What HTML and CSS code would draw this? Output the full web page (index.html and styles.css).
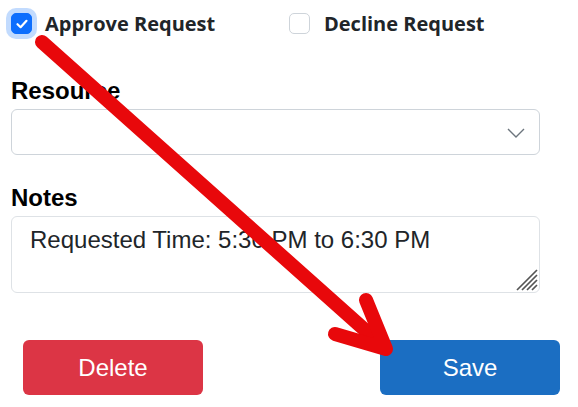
FILE: index.html
```html
<!DOCTYPE html>
<html lang="en">
<head>
    <meta charset="UTF-8">
    <meta name="viewport" content="width=device-width, initial-scale=1.0">
    <title>Request Review</title>
    <link rel="stylesheet" href="styles.css">
</head>
<body>

    <div class="page">
        <!-- Approve / decline choice -->
        <div class="choice-row">
            <label class="choice">
                <span class="box checked">
                    <svg width="14" height="14" viewBox="0 0 14 14"><path d="M2.5 7.2 L5.6 10.2 L11.5 3.8" fill="none" stroke="#fff" stroke-width="2.2" stroke-linecap="round" stroke-linejoin="round"/></svg>
                </span>
                Approve Request
            </label>
            <label class="choice decline">
                <span class="box"></span>
                Decline Request
            </label>
        </div>

        <div class="field resource">
            <div class="field-label">Resource</div>
            <div class="select">
                <svg class="chevron" width="18" height="10" viewBox="0 0 18 10"><path d="M1 1 L9 9 L17 1" fill="none" stroke="#6c757d" stroke-width="1.4"/></svg>
            </div>
        </div>

        <div class="field notes">
            <div class="field-label">Notes</div>
            <div class="textarea">
                Requested Time: 5:30 PM to 6:30 PM
                <svg class="grip" width="24" height="24" viewBox="0 0 24 24">
                    <path d="M23 3 L3 23 M23 8 L8 23 M23 13 L13 23 M23 18 L18 23" stroke="#555" stroke-width="1.7"/>
                </svg>
            </div>
        </div>

        <div class="actions">
            <button class="btn btn-delete">Delete</button>
            <button class="btn btn-save">Save</button>
        </div>

        <!-- annotation arrow -->
        <svg class="arrow" width="578" height="407" viewBox="0 0 578 407">
            <g fill="none" stroke="#e8080b" stroke-width="14" stroke-linecap="round" stroke-linejoin="round">
                <path d="M42 42 L384 347"/>
                <path d="M366 300 L386 349 L335 334"/>
            </g>
        </svg>
    </div>

</body>
</html>
```

FILE: styles.css
```css
body {
    margin: 0;
    background: #fff;
    font-family: "Liberation Sans", Arial, sans-serif;
    color: #000;
}
.page {
    position: relative;
    width: 578px;
    height: 407px;
    padding: 0 11px;
    box-sizing: border-box;
    overflow: hidden;
}
.choice-row {
    display: flex;
    align-items: center;
    padding-top: 13px;
    height: 21px;
}
.choice {
    display: flex;
    align-items: center;
    gap: 13px;
    font-family: "Open Sans", "Noto Sans", sans-serif;
    font-weight: 700;
    font-size: 20px;
    color: #212529;
    width: 281px;
}
.choice.decline {
    gap: 14px;
}
.box {
    width: 19px;
    height: 19px;
    border: 1px solid #ced4da;
    border-radius: 5px;
    display: flex;
    align-items: center;
    justify-content: center;
    flex: none;
}
.box.checked {
    background: #0d6efd;
    border-color: #0d6efd;
    box-shadow: 0 0 0 5px rgba(13, 110, 253, 0.25);
}
.field {
    width: 529px;
}
.field-label {
    font-weight: bold;
    font-size: 24px;
    line-height: 28px;
    margin-bottom: 4px;
}
.resource {
    margin-top: 43px;
}
.select {
    position: relative;
    height: 46px;
    box-sizing: border-box;
    border: 1px solid #ced4da;
    border-radius: 6px;
}
.chevron {
    position: absolute;
    right: 14px;
    top: 18px;
}
.notes {
    margin-top: 29px;
}
.textarea {
    position: relative;
    height: 77px;
    box-sizing: border-box;
    border: 1px solid #dee2e6;
    border-radius: 6px;
    padding: 8px 18px;
    font-size: 24px;
    line-height: 30px;
    color: #212529;
}
.grip {
    position: absolute;
    right: 1px;
    bottom: 1px;
}
.actions {
    display: flex;
    justify-content: space-between;
    margin-top: 47px;
    padding: 0 7px 0 12px;
}
.btn {
    width: 180px;
    height: 55px;
    border: none;
    border-radius: 6px;
    color: #fff;
    font-family: "Liberation Sans", Arial, sans-serif;
    font-size: 24px;
    cursor: pointer;
}
.btn-delete {
    background: #dc3545;
}
.btn-save {
    background: #1b6ec2;
}
.arrow {
    position: absolute;
    left: 0;
    top: 0;
    pointer-events: none;
}
```
